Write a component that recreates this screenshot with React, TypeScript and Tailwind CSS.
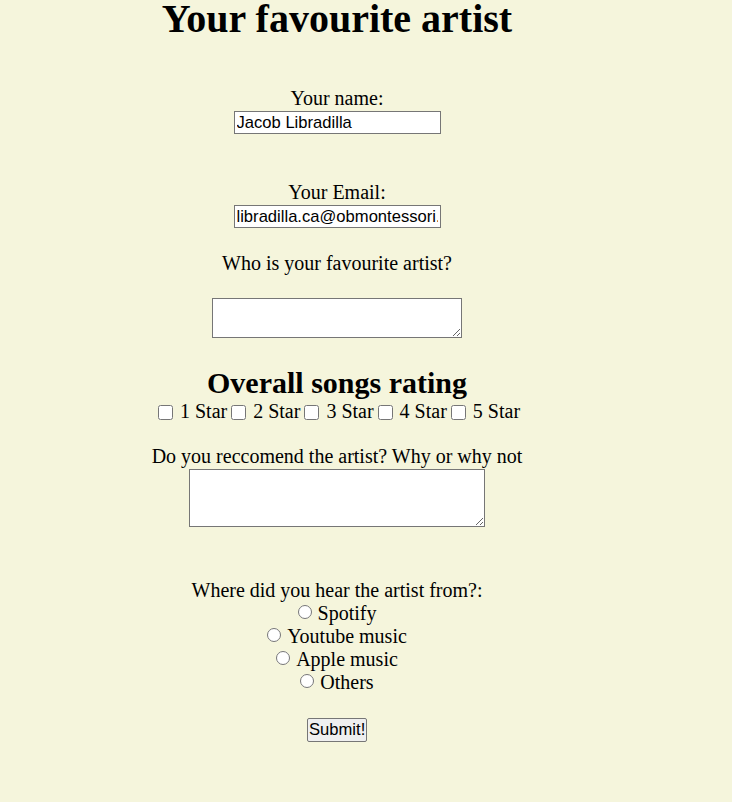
import { useState } from 'react';

function App() {
	const [name, setName] = useState('Jacob Libradilla');
	const [email, setEmail] = useState('libradilla.ca@obmontessori.edu.ph');
	const [stars, setStars] = useState<number[]>([]);
	const [source, setSource] = useState('');

	const toggleStar = (n: number) =>
		setStars(stars.includes(n) ? stars.filter((s) => s !== n) : [...stars, n]);

	const fieldClass =
		"block mx-auto h-[23px] w-[207px] border border-[#767676] bg-white px-[2px] text-left font-['Liberation_Sans',Arial,sans-serif] text-[16.6px] leading-[19px] text-black outline-none";

	return (
		<div className="min-h-[802px] bg-[#f5f5dc] font-['Liberation_Serif','Times_New_Roman',serif] text-[20px] leading-[23px] text-black overflow-hidden">
			<form className="w-[674px] text-center" onSubmit={(e) => e.preventDefault()}>
				<h1 className="text-[40px] font-bold leading-[38px]">Your favourite artist</h1>

				<div className="mt-[49px]">Your name:</div>
				<input
					type="text"
					value={name}
					onChange={(e) => setName(e.target.value)}
					className={`mt-[1px] ${fieldClass}`}
				/>

				<div className="mt-[47px]">Your Email:</div>
				<input
					type="email"
					value={email}
					onChange={(e) => setEmail(e.target.value)}
					className={`mt-[1px] ${fieldClass}`}
				/>

				<div className="mt-[24px]">Who is your favourite artist?</div>
				<textarea className="mx-auto mt-[23px] block h-[40px] w-[250px] border border-[#767676] bg-white text-[16px]" />

				<h2 className="mt-[28px] text-[30px] font-bold leading-[34px]">Overall songs rating</h2>
				<div className="flex items-center justify-center">
					{[1, 2, 3, 4, 5].map((n) => (
						<label key={n} className="flex items-center">
							<input
								type="checkbox"
								checked={stars.includes(n)}
								onChange={() => toggleStar(n)}
								className="mt-[1px] mr-[7px] ml-[4px] h-[15px] w-[15px]"
							/>
							<span>{n} Star</span>
						</label>
					))}
				</div>

				<div className="mt-[22px]">Do you reccomend the artist? Why or why not</div>
				<textarea className="mx-auto mt-[1px] block h-[58px] w-[296px] border border-[#767676] bg-white text-[16px]" />

				<div className="mt-[52px]">Where did you hear the artist from?:</div>
				{['Spotify', 'Youtube music', 'Apple music', 'Others'].map((s) => (
					<label key={s} className="flex items-center justify-center">
						<input
							type="radio"
							name="source"
							checked={source === s}
							onChange={() => setSource(s)}
							className="-mt-[4px] mr-[6px] h-[14px] w-[14px]"
						/>
						{s}
					</label>
				))}

				<button
					type="submit"
					className="mx-auto mt-[24px] block h-[24px] w-[60px] rounded-[2px] border border-[#767676] bg-[#efefef] px-[1px] font-['Liberation_Sans',Arial,sans-serif] text-[16.6px] leading-[20px] text-black"
				>
					Submit!
				</button>
			</form>
		</div>
	);
}

export default App;
